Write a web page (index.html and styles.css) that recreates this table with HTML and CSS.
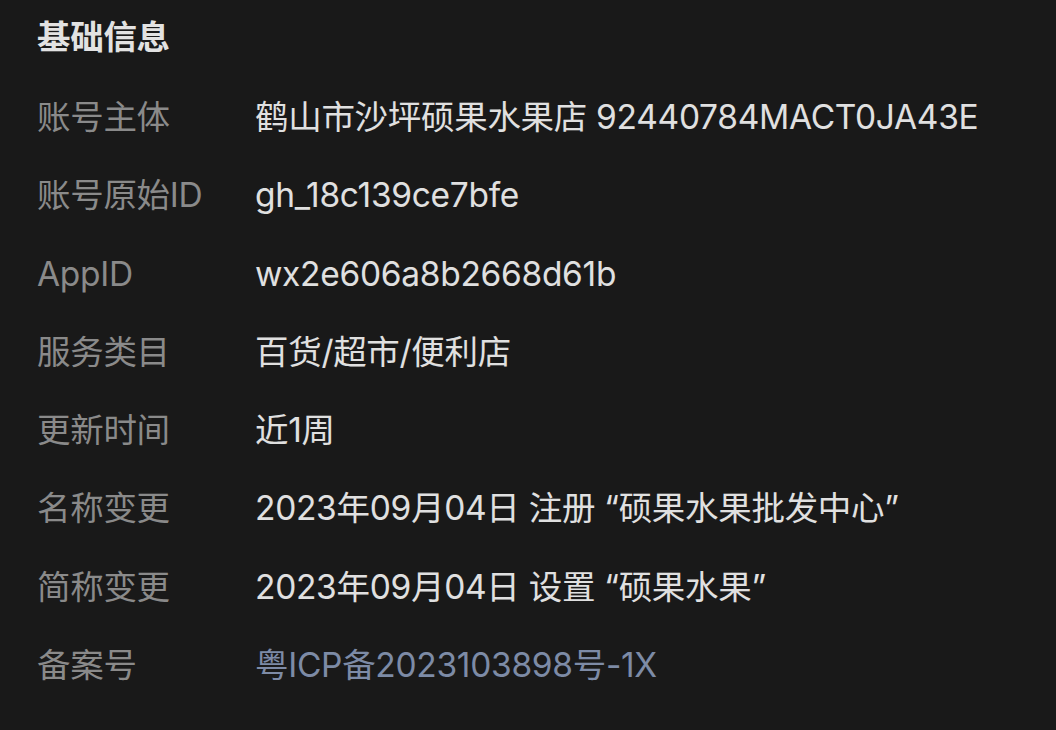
FILE: index.html
```html
<!doctype html>
<html lang="zh-CN">
<head>
    <meta charset="UTF-8">
    <title>基础信息</title>
    <link rel="stylesheet" href="styles.css">
</head>
<body>
    <div class="info-panel">
        <h2 class="info-title">基础信息</h2>
        <div class="info-list">
            <div class="info-row">
                <span class="info-label">账号主体</span>
                <span class="info-value">鹤山市沙坪硕果水果店 92440784MACT0JA43E</span>
            </div>
            <div class="info-row">
                <span class="info-label">账号原始ID</span>
                <span class="info-value">gh_18c139ce7bfe</span>
            </div>
            <div class="info-row">
                <span class="info-label">AppID</span>
                <span class="info-value">wx2e606a8b2668d61b</span>
            </div>
            <div class="info-row">
                <span class="info-label">服务类目</span>
                <span class="info-value">百货/超市/便利店</span>
            </div>
            <div class="info-row">
                <span class="info-label">更新时间</span>
                <span class="info-value">近1周</span>
            </div>
            <div class="info-row">
                <span class="info-label">名称变更</span>
                <span class="info-value">2023年09月04日 注册 “硕果水果批发中心”</span>
            </div>
            <div class="info-row">
                <span class="info-label">简称变更</span>
                <span class="info-value">2023年09月04日 设置 “硕果水果”</span>
            </div>
            <div class="info-row">
                <span class="info-label">备案号</span>
                <a class="info-value info-link" href="#">粤ICP备2023103898号-1X</a>
            </div>
        </div>
    </div>
</body>
</html>
```

FILE: styles.css
```css
body {
    margin: 0;
    background-color: #191919;
    color: #e0e0e0;
    font-family: Inter, "Noto Sans CJK SC", sans-serif;
    font-size: 33.5px;
    letter-spacing: -0.3px;
}

.info-panel {
    padding: 0 37px;
}

.info-title {
    margin: 0 0 4px;
    font-size: 33.5px;
    font-weight: 700;
    line-height: 74px;
    color: #e2e2e2;
}

.info-row {
    display: grid;
    grid-template-columns: 218px 1fr;
    line-height: 78.3px;
    white-space: nowrap;
}

.info-label {
    color: #8a8a8a;
}

.info-value {
    color: #e0e0e0;
}

.info-link {
    color: #7d8ba6;
    text-decoration: none;
}
```
